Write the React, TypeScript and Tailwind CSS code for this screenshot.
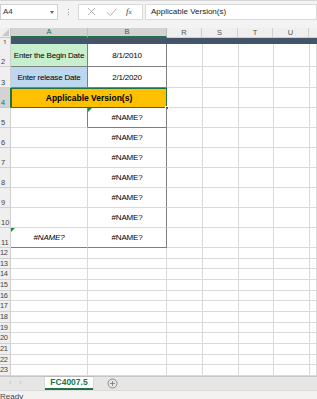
import React from 'react';

type Cell = {
  text?: string;
  className?: string;
  tri?: boolean;
};

type RowDef = {
  n: number;
  h: string;
  a?: Cell;
  b?: Cell;
  merged?: Cell;
};

const grid = 'border-r border-b border-[#dadada]';

const rows: RowDef[] = [
  {
    n: 2,
    h: 'h-[23px]',
    a: { text: 'Enter the Begin Date', className: 'bg-[#c6efce] border-r border-b border-[#7f7f7f]' },
    b: { text: '8/1/2010', className: 'border-r border-b border-[#7f7f7f]' },
  },
  {
    n: 3,
    h: 'h-[21px]',
    a: { text: 'Enter release Date', className: 'bg-[#bdd7ee] border-r border-b border-[#7f7f7f]' },
    b: { text: '2/1/2020', className: 'border-r border-b border-[#7f7f7f]' },
  },
  { n: 4, h: 'h-[20px]', merged: { text: 'Applicable Version(s)' } },
  {
    n: 5,
    h: 'h-[20px]',
    a: { className: 'border-r border-b border-r-[#7f7f7f] border-b-[#dadada]' },
    b: { text: '#NAME?', className: 'border-r border-b border-[#7f7f7f]', tri: true },
  },
  ...[6, 7, 8, 9, 10].map((n) => ({
    n,
    h: 'h-[20px]',
    a: { className: grid },
    b: { text: '#NAME?', className: 'border-r border-b border-r-[#7f7f7f] border-b-[#dadada]' },
  })),
  {
    n: 11,
    h: 'h-[20px]',
    a: { text: '#NAME?', className: 'italic border-r border-b border-r-[#dadada] border-b-[#7f7f7f]', tri: true },
    b: { text: '#NAME?', className: 'border-r border-b border-[#7f7f7f]' },
  },
];

const smallHeights = [
  'h-[11px]', 'h-[10px]', 'h-[11px]', 'h-[11px]', 'h-[10px]', 'h-[11px]',
  'h-[11px]', 'h-[10px]', 'h-[11px]', 'h-[11px]', 'h-[10px]', 'h-[11px]',
];

function RestCols() {
  return (
    <>
      <div className={`w-[36px] shrink-0 ${grid}`} />
      <div className={`w-[36px] shrink-0 ${grid}`} />
      <div className={`w-[35px] shrink-0 ${grid}`} />
      <div className={`w-[36px] shrink-0 ${grid}`} />
      <div className={`flex-1 ${grid}`} />
    </>
  );
}

function Triangle() {
  return (
    <span className="absolute left-0 top-0 w-0 h-0 border-t-[4px] border-r-[4px] border-t-[#1e8a3e] border-r-transparent" />
  );
}

function CellBox({ cell, w }: { cell?: Cell; w: string }) {
  return (
    <div className={`relative ${w} shrink-0 flex items-center justify-center pt-[1px] whitespace-nowrap text-[8px] tracking-[-0.2px] text-black leading-none ${cell?.className ?? grid}`}>
      {cell?.tri && <Triangle />}
      {cell?.text}
    </div>
  );
}

export default function App() {
  return (
    <div className="w-[317px] h-[399px] overflow-hidden bg-white font-['Liberation_Sans',Arial,sans-serif] flex flex-col select-none">
      {/* formula bar */}
      <div className="h-[28px] shrink-0 bg-[#f3f3f3] border-t border-[#d6d6d6] flex items-start pt-[3px]">
        <div className="w-[58px] h-[16px] bg-white border border-[#d0d0d0] flex items-center justify-between pl-[2px] pr-[3px]">
          <span className="text-[8px] text-[#333]">A4</span>
          <span className="w-0 h-0 border-l-[2.5px] border-r-[2.5px] border-t-[3px] border-l-transparent border-r-transparent border-t-[#666]" />
        </div>
        <div className="w-[20px] h-[16px] flex flex-col items-center justify-center gap-[1.5px]">
          <span className="w-[1px] h-[1px] bg-[#999]" />
          <span className="w-[1px] h-[1px] bg-[#999]" />
          <span className="w-[1px] h-[1px] bg-[#999]" />
        </div>
        <div className="w-[65px] h-[16px] bg-white border border-[#d8d8d8] flex items-center">
          <svg width="20" height="14" viewBox="0 0 20 14" className="ml-[3px]">
            <path d="M6 3 L13 10 M13 3 L6 10" stroke="#b3b3b3" strokeWidth="1" fill="none" />
          </svg>
          <svg width="20" height="14" viewBox="0 0 20 14">
            <path d="M5 7.5 L8.5 10.5 L14.5 3.5" stroke="#b3b3b3" strokeWidth="1" fill="none" />
          </svg>
          <span className="ml-[4px] text-[9px] italic font-['Liberation_Serif',serif] text-[#444]">f<span className="text-[7px]">x</span></span>
        </div>
        <div className="ml-[2px] flex-1 h-[16px] bg-white border border-[#d8d8d8] flex items-center pl-[5px]">
          <span className="text-[8px] text-[#222] leading-none">Applicable Version(s)</span>
        </div>
      </div>

      {/* column headers */}
      <div className="h-[10px] shrink-0 flex bg-[#efefef] text-[7.5px] leading-none">
        <div className="relative w-[11px] shrink-0 border-r border-b border-[#c8c8c8]">
          <span className="absolute right-[1px] bottom-[1px] w-0 h-0 border-b-[7px] border-l-[7px] border-b-[#c8c8c8] border-l-transparent" />
        </div>
        <div className="w-[77px] shrink-0 flex items-center justify-center bg-[#d3d3d3] text-[#217346] border-r border-[#bdbdbd] border-b-2 border-b-[#217346]">A</div>
        <div className="w-[79px] shrink-0 flex items-center justify-center bg-[#d3d3d3] text-[#217346] border-r border-[#bdbdbd] border-b-2 border-b-[#217346]">B</div>
        <div className="w-[35px] shrink-0 flex items-center justify-center text-[#555] border-r border-b border-[#d0d0d0]">R</div>
        <div className="w-[36px] shrink-0 flex items-center justify-center text-[#555] border-r border-b border-[#d0d0d0]">S</div>
        <div className="w-[35px] shrink-0 flex items-center justify-center text-[#555] border-r border-b border-[#d0d0d0]">T</div>
        <div className="w-[36px] shrink-0 flex items-center justify-center text-[#555] border-r border-b border-[#d0d0d0]">U</div>
        <div className="flex-1 border-b border-[#d0d0d0]" />
      </div>

      {/* row 1 */}
      <div className="h-[6px] shrink-0 flex overflow-hidden">
        <div className="w-[11px] shrink-0 bg-[#efefef] border-r border-[#c8c8c8] text-[7px] leading-none text-[#555] pl-[3px] pt-[1px]">1</div>
        <div className="flex-1 bg-[#44546a]" />
      </div>

      {/* rows 2-11 */}
      {rows.map((r) => (
        <div key={r.n} className={`${r.h} shrink-0 flex`}>
          <div
            className={`w-[11px] shrink-0 flex items-end pl-[1px] pb-[1px] text-[7.5px] leading-none border-r border-b ${
              r.n === 4
                ? 'bg-[#d3d3d3] text-[#217346] border-r-[#217346] border-b-[#c8c8c8]'
                : 'bg-[#efefef] text-[#444] border-[#d0d0d0]'
            }`}
          >
            {r.n}
          </div>
          {r.merged ? (
            <div className="relative w-[156px] shrink-0 bg-[#ffc000] border-[1.5px] border-[#217346] flex items-center justify-center whitespace-nowrap text-[8.5px] font-bold text-black">
              {r.merged.text}
              <span className="absolute -right-[3px] -bottom-[3px] w-[4px] h-[4px] bg-[#217346] border border-white" />
            </div>
          ) : (
            <>
              <CellBox cell={r.a} w="w-[77px]" />
              <CellBox cell={r.b} w="w-[79px]" />
            </>
          )}
          <RestCols />
        </div>
      ))}

      {/* rows 12-23 */}
      {smallHeights.map((h, i) => (
        <div key={i} className={`${h} shrink-0 flex`}>
          <div className="w-[11px] shrink-0 bg-[#efefef] border-r border-b border-[#d0d0d0] flex items-center text-[7.5px] leading-none text-[#444] tracking-[-0.3px]">
            {i + 12}
          </div>
          <div className={`w-[77px] shrink-0 ${grid}`} />
          <div className={`w-[79px] shrink-0 ${grid}`} />
          <RestCols />
        </div>
      ))}

      {/* sheet tabs */}
      <div className="h-[14px] shrink-0 bg-[#e6e6e6] border-t border-[#c6c6c6] flex items-stretch">
        <div className="w-[45px] flex items-center gap-[8px] pl-[9px] text-[7px] text-[#b8b8b8]">
          <span>‹</span>
          <span>›</span>
        </div>
        <div className="w-[48px] bg-white border-b-2 border-[#217346] flex items-center justify-center text-[8.5px] font-bold text-[#217346] leading-none shadow-[0_0_1px_rgba(0,0,0,0.3)]">
          FC4007.5
        </div>
        <div className="ml-[14px] flex items-center">
          <svg width="11" height="11" viewBox="0 0 11 11">
            <circle cx="5.5" cy="5.5" r="4.5" stroke="#777" strokeWidth="0.8" fill="none" />
            <path d="M5.5 3 V8 M3 5.5 H8" stroke="#777" strokeWidth="0.8" />
          </svg>
        </div>
      </div>

      {/* status bar */}
      <div className="flex-1 bg-[#f3f2f1] border-t border-[#dcdcdc]">
        <span className="block text-[8px] leading-none text-[#444] pt-[2px]">Ready</span>
      </div>
    </div>
  );
}
